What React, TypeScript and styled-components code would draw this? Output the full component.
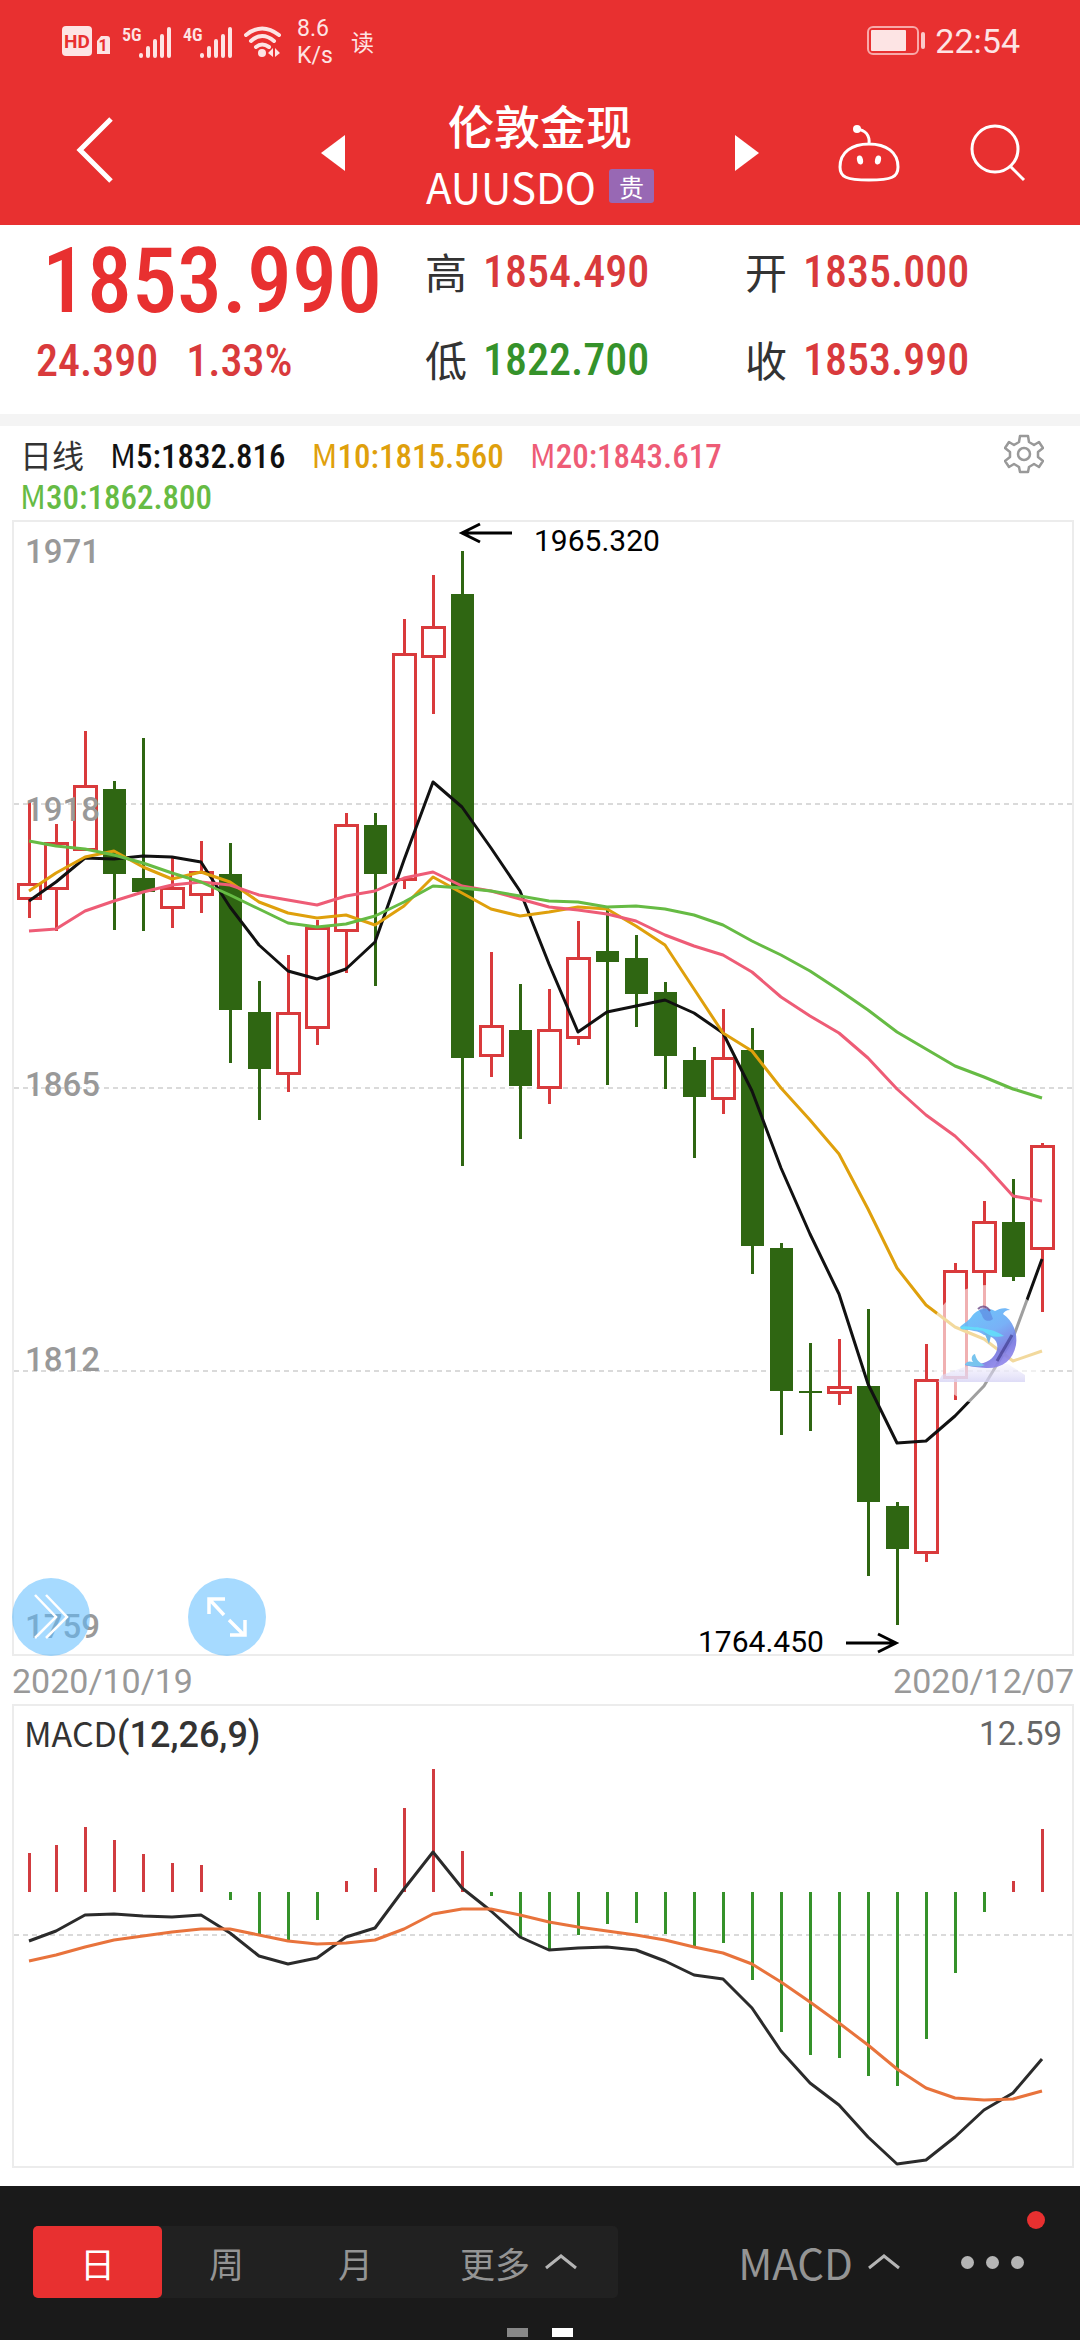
import React from "react";
import styled, { createGlobalStyle } from "styled-components";

const CJK = '"Noto Sans CJK SC", "Noto Sans", sans-serif';
const ROBOTO = 'Roboto, "Noto Sans CJK SC", sans-serif';
const NUM = '"Roboto Condensed", Roboto, sans-serif';

const RED = "#e83030";
const UP = "#d93a3c";
const DOWN = "#2f6612";

const GlobalStyle = createGlobalStyle`
  * { box-sizing: border-box; }
  body { margin: 0; background: #fff; font-family: ${CJK}; color: #333; }
  button { border: 0; padding: 0; margin: 0; background: none; font: inherit; color: inherit; cursor: pointer; }
  svg { display: block; }
`;

const Page = styled.div`
  display: flex;
  flex-direction: column;
  min-height: 100vh;
`;

const Header = styled.header`
  background: ${RED};
  color: #fff;
`;

const StatusBar = styled.div`
  display: flex;
  justify-content: space-between;
  align-items: center;
  height: 81px;
  padding: 0 60px 0 62px;
  color: #fde4e4;
  font-family: ${ROBOTO};
`;

const StatusGroup = styled.div`
  display: flex;
  align-items: center;
  gap: 10px;
`;

const Speed = styled.div`
  width: 44px;
  margin-left: 5px;
  padding-top: 2px;
  font-size: 23px;
  line-height: 27px;
`;

const ReadMark = styled.span`
  font-size: 23px;
`;

const Clock = styled.time`
  font-size: 34px;
  line-height: 40px;
`;

const Nav = styled.nav`
  display: grid;
  grid-template-columns: 1fr 524px 1fr;
  align-items: center;
  height: 144px;
`;

const NavStart = styled.div`
  display: flex;
  padding: 0 0 6px 76px;
`;

const NavMiddle = styled.div`
  display: flex;
  justify-content: space-between;
  align-items: center;
  padding: 0 42px;
`;

const NavEnd = styled.div`
  display: flex;
  justify-content: flex-end;
  align-items: center;
  gap: 70px;
  padding-right: 54px;
`;

const IconButton = styled.button`
  display: flex;
  align-items: center;
  justify-content: center;
`;

const Titles = styled.div`
  display: flex;
  flex-direction: column;
  align-items: center;
  padding-top: 4px;
`;

const Title = styled.h1`
  margin: 0;
  font-size: 46px;
  line-height: 62px;
  font-weight: 500;
`;

const SubTitle = styled.div`
  display: flex;
  align-items: center;
  gap: 13px;
  font-size: 42px;
  line-height: 62px;
`;

const Badge = styled.span`
  width: 45px;
  height: 34px;
  border-radius: 3px;
  background: #9868b4;
  font-size: 25px;
  line-height: 34px;
  text-align: center;
`;

const Quote = styled.section`
  display: grid;
  grid-template-columns: 389px 320px 1fr;
  height: 201px;
  padding-left: 36px;
  border-bottom: 12px solid #f4f4f4;
`;

const Price = styled.div`
  padding: 2px 0 0 6px;
  font-family: ${NUM};
  font-size: 90px;
  line-height: 110px;
  color: ${RED};
  font-weight: 500;
`;

const Changes = styled.div`
  display: flex;
  gap: 28px;
  font-family: ${NUM};
  font-size: 44px;
  line-height: 48px;
  font-weight: 500;
  color: ${UP};
`;

const QuoteColumn = styled.dl`
  display: flex;
  flex-direction: column;
  margin: 0;
  padding-top: 3px;
`;

const QuoteItem = styled.div`
  display: flex;
  align-items: center;
  gap: 16px;
  height: 88px;
`;

const QuoteLabel = styled.dt`
  padding-bottom: 2px;
  font-size: 42px;
  line-height: 60px;
`;

const QuoteValue = styled.dd<{ $color: string }>`
  margin: 0;
  font-family: ${NUM};
  font-size: 44px;
  line-height: 60px;
  font-weight: 500;
  color: ${(p) => p.$color};
`;

const LegendBar = styled.div`
  display: flex;
  align-items: flex-start;
  justify-content: space-between;
  height: 94px;
  padding: 8px 36px 0 20px;
`;

const Legend = styled.div`
  display: flex;
  flex-wrap: wrap;
  column-gap: 26px;
  max-width: 860px;
  font-size: 32px;
  line-height: 41px;
`;

const Ma = styled.span<{ $color: string }>`
  height: 41px;
  color: ${(p) => p.$color};
`;

const MaValue = styled.span`
  font-family: ${NUM};
  font-size: 33px;
  font-weight: 500;
`;

const ChartFrame = styled.section`
  position: relative;
  margin: 0 6px 0 12px;
  border: 2px solid #ececec;
`;

const ChartSvg = styled.svg`
  width: 100%;
  height: auto;
  overflow: visible;
`;

const RoundButton = styled.button<{ $left: number }>`
  position: absolute;
  left: ${(p) => p.$left}px;
  bottom: -2px;
  display: flex;
  align-items: center;
  justify-content: center;
  width: 78px;
  height: 78px;
  border-radius: 50%;
  background: rgba(93, 187, 255, 0.55);
`;

const Mascot = styled.button`
  position: absolute;
  right: 24px;
  bottom: 22%;
  width: 120px;
  height: 120px;
  border-radius: 50%;
  background: rgba(255, 255, 255, 0.6);
`;

const DateRow = styled.div`
  display: flex;
  justify-content: space-between;
  align-items: center;
  height: 48px;
  padding: 2px 6px 0 12px;
  font-family: ${ROBOTO};
  font-size: 34px;
  line-height: 46px;
  color: #999;
`;

const MacdHead = styled.div`
  display: flex;
  justify-content: space-between;
  align-items: center;
  position: absolute;
  inset: 2px 10px auto 10px;
  font-size: 34px;
  line-height: 50px;
`;

const MacdParams = styled.span`
  font-weight: 500;
  font-family: ${ROBOTO};
  font-size: 36px;
`;

const MacdValue = styled.span`
  font-family: ${ROBOTO};
  font-size: 33px;
  color: #666;
`;

const Footer = styled.footer`
  display: flex;
  flex-direction: column;
  justify-content: space-between;
  height: 154px;
  margin-top: auto;
  padding: 40px 0 3px;
  background: #1a1a1a;
  color: #949494;
`;

const FooterRow = styled.div`
  display: flex;
  align-items: center;
  justify-content: space-between;
  padding: 0 56px 0 33px;
`;

const Segments = styled.div`
  display: flex;
  height: 72px;
  border-radius: 5px;
  background: #212121;
`;

const Segment = styled.button<{ $active?: boolean; $wide?: boolean }>`
  display: flex;
  align-items: center;
  justify-content: center;
  gap: 14px;
  width: ${(p) => (p.$wide ? 198 : 129)}px;
  border-radius: 5px;
  background: ${(p) => (p.$active ? RED : "transparent")};
  color: ${(p) => (p.$active ? "#fff" : "inherit")};
  font-size: 35px;
`;

const FooterTools = styled.div`
  display: flex;
  align-items: center;
  gap: 60px;
`;

const Indicator = styled.button`
  display: flex;
  align-items: center;
  gap: 14px;
  font-size: 42px;
  line-height: 60px;
`;

const MoreButton = styled.button`
  position: relative;
  display: flex;
  align-items: center;
  justify-content: space-between;
  width: 63px;
  height: 60px;
`;

const Dot = styled.i`
  width: 13px;
  height: 13px;
  border-radius: 50%;
  background: #b5b5b5;
`;

const NoticeDot = styled.i`
  position: absolute;
  right: -21px;
  top: -21px;
  width: 18px;
  height: 18px;
  border-radius: 50%;
  background: ${RED};
`;

const Pager = styled.div`
  display: flex;
  justify-content: center;
  gap: 24px;
`;

const PagerMark = styled.i<{ $on?: boolean }>`
  width: 21px;
  height: 9px;
  background: ${(p) => (p.$on ? "#fff" : "#888")};
`;

/* x position of the nth trading day in both charts */
const dayX = (i: number) => (i === 0 ? 17 : 15 + 29 * i);

/* wick top, body top, body bottom, wick bottom, rising */
type Candle = [number, number, number, number, boolean];
const candles: Candle[] = [
  [282, 363, 379, 398, true],
  [304, 322, 369, 411, true],
  [211, 265, 330, 330, true],
  [261, 269, 354, 410, false],
  [218, 358, 372, 411, false],
  [336, 367, 388, 408, true],
  [321, 351, 375, 393, true],
  [323, 354, 490, 543, false],
  [461, 492, 549, 600, false],
  [435, 492, 554, 572, true],
  [400, 407, 508, 525, true],
  [293, 304, 411, 453, true],
  [293, 305, 354, 466, false],
  [99, 133, 360, 369, true],
  [55, 106, 137, 194, true],
  [31, 74, 538, 646, false],
  [432, 505, 536, 557, true],
  [464, 510, 566, 619, false],
  [469, 509, 568, 584, true],
  [401, 437, 518, 525, true],
  [386, 431, 442, 565, false],
  [415, 438, 474, 507, false],
  [462, 472, 536, 569, false],
  [527, 540, 577, 638, false],
  [489, 537, 579, 594, true],
  [508, 530, 726, 754, false],
  [723, 728, 871, 915, false],
  [823, 871, 873, 911, false],
  [819, 866, 873, 885, true],
  [789, 866, 982, 1056, false],
  [982, 986, 1029, 1105, false],
  [824, 859, 1033, 1042, true],
  [743, 750, 858, 880, true],
  [681, 701, 752, 791, true],
  [659, 702, 757, 761, false],
  [623, 625, 729, 792, true],
];

const averages = [
  {
    color: "#111",
    ys: [381, 362, 338, 339, 336, 337, 342, 387, 425, 451, 459, 449, 422, 340, 262, 287, 328, 371, 444, 512, 492, 486, 480, 493, 513, 571, 648, 714, 774, 864, 923, 921, 896, 866, 818, 739],
  },
  {
    color: "#dfa00c",
    ys: [371, 353, 337, 331, 347, 359, 352, 362, 382, 393, 398, 395, 405, 386, 357, 373, 389, 396, 392, 387, 389, 406, 425, 469, 513, 531, 568, 600, 634, 689, 748, 785, 807, 819, 841, 831],
  },
  {
    color: "#ee5c76",
    ys: [411, 409, 391, 381, 372, 365, 362, 365, 375, 380, 385, 376, 371, 358, 352, 366, 371, 379, 387, 390, 394, 401, 415, 426, 435, 452, 477, 496, 513, 538, 569, 595, 616, 644, 676, 681],
  },
  {
    color: "#66bb44",
    ys: [321, 326, 329, 335, 343, 353, 362, 375, 389, 403, 407, 404, 396, 382, 366, 368, 371, 376, 381, 382, 387, 386, 389, 395, 405, 421, 435, 451, 470, 490, 512, 529, 546, 557, 569, 578],
  },
];

const macdZero = 188;
const macdBars = [149, 141, 123, 136, 150, 159, 161, 196, 230, 236, 216, 177, 164, 104, 65, 147, 192, 233, 245, 231, 220, 219, 230, 242, 239, 276, 328, 351, 354, 372, 382, 335, 269, 208, 177, 125];
const dif = [237, 227, 211, 210, 212, 213, 211, 229, 252, 260, 254, 233, 224, 185, 148, 184, 207, 233, 246, 244, 243, 246, 257, 271, 275, 304, 347, 379, 401, 433, 460, 456, 433, 406, 389, 355];
const dea = [257, 251, 243, 236, 232, 228, 225, 225, 231, 237, 240, 239, 236, 225, 210, 205, 205, 211, 218, 223, 227, 231, 236, 243, 249, 260, 278, 298, 319, 341, 365, 384, 394, 396, 395, 387];

const toPoints = (ys: number[]) => ys.map((y, i) => `${dayX(i)},${y}`).join(" ");

const gridLines = [284, 568, 851];
const axisLabels = [
  { text: "1971", y: 43 },
  { text: "1918", y: 301 },
  { text: "1865", y: 576 },
  { text: "1812", y: 851 },
  { text: "1759", y: 1118 },
];

function CandleMark({ candle, x }: { candle: Candle; x: number }) {
  const [high, top, bottom, low, rising] = candle;
  if (!rising) {
    return (
      <g fill={DOWN}>
        <rect x={x - 1} y={high} width={3} height={low - high} />
        <rect x={x - 11} y={top} width={23} height={bottom - top} />
      </g>
    );
  }
  return (
    <g stroke={UP} strokeWidth={3} fill="none">
      <path d={`M${x} ${high}V${top}M${x} ${bottom}V${low}`} />
      <rect x={x - 11} y={top + 1} width={22} height={bottom - top - 2} />
    </g>
  );
}

function PriceChart() {
  return (
    <ChartSvg viewBox="2 2 1058 1132" role="img" aria-label="日线">
      {gridLines.map((y) => (
        <line key={y} x1={2} x2={1060} y1={y} y2={y} stroke="#dadada" strokeWidth={2} strokeDasharray="5 4" />
      ))}
      <g shapeRendering="crispEdges">
        {candles.map((c, i) => (
          <CandleMark key={i} candle={c} x={dayX(i)} />
        ))}
      </g>
      {averages.map((a) => (
        <polyline key={a.color} points={toPoints(a.ys)} fill="none" stroke={a.color} strokeWidth={3} strokeLinejoin="round" />
      ))}
      <g fontFamily="Roboto, sans-serif" fontSize={33} fontWeight={500} fill="#999">
        {axisLabels.map((l) => (
          <text key={l.text} x={13} y={l.y}>
            {l.text}
          </text>
        ))}
      </g>
      <g fontFamily="Roboto, sans-serif" fontSize={30} fill="#000">
        <text x={522} y={31}>1965.320</text>
        <text x={686} y={1132}>1764.450</text>
      </g>
      <g fill="none" stroke="#000" strokeWidth={3}>
        <path d="M500 13H451M468 4L450 13L468 22" />
        <path d="M834 1123H883M866 1114L884 1123L866 1132" />
      </g>
    </ChartSvg>
  );
}

function MacdChart() {
  return (
    <ChartSvg viewBox="2 2 1058 460" role="img" aria-label="MACD">
      <line x1={2} x2={1060} y1={231} y2={231} stroke="#dadada" strokeWidth={2} strokeDasharray="5 4" />
      <g shapeRendering="crispEdges">
        {macdBars.map((y, i) => (
          <line key={i} x1={dayX(i)} x2={dayX(i)} y1={macdZero} y2={y} stroke={y < macdZero ? "#d13c40" : "#35922a"} strokeWidth={3} />
        ))}
      </g>
      <polyline points={toPoints(dif)} fill="none" stroke="#2b2b2b" strokeWidth={3} strokeLinejoin="round" />
      <polyline points={toPoints(dea)} fill="none" stroke="#e8733c" strokeWidth={3} strokeLinejoin="round" />
    </ChartSvg>
  );
}

const Dolphin = () => (
  <svg width="120" height="120" viewBox="0 0 120 120" aria-hidden="true">
    <defs>
      <linearGradient id="dolphinSkin" x1="0.2" y1="0" x2="0.8" y2="1">
        <stop offset="0" stopColor="#5cc0fa" />
        <stop offset="0.45" stopColor="#6aa8f6" />
        <stop offset="0.75" stopColor="#7676e0" />
        <stop offset="1" stopColor="#9a8cf0" />
      </linearGradient>
      <linearGradient id="dolphinBase" x1="0" y1="0" x2="0" y2="1">
        <stop offset="0" stopColor="#e9e6fb" stopOpacity="0.3" />
        <stop offset="1" stopColor="#d6d3f5" stopOpacity="0.8" />
      </linearGradient>
    </defs>
    <path d="M14 90L45 79H80L97 90V97H10Z" fill="url(#dolphinBase)" />
    <path
      d="M32 42C36 38 41 36 44 31C50 23 60 22 67 26C72 23 78 22 82 25C78 25 76 27 75 29C85 36 90 48 88 60C85 76 73 84 58 83C50 82 44 82 37 80C36 78 42 78 46 79C57 80 66 74 69 65C71 56 65 51 56 50C52 46 41 45 33 44Z"
      fill="url(#dolphinSkin)"
      opacity="0.9"
    />
    <path d="M33 42C39 40 44 43 49 42C56 44 66 44 76 51C68 53 60 51 55 46C48 44 39 45 33 44Z" fill="#62e0fa" opacity="0.85" />
    <path d="M56 47L61 59L63 51Z" fill="#6db4e8" />
    <path d="M37 80C38 76 42 76 45 77C42 73 45 69 47 69C48 74 51 78 57 80C51 83 43 81 37 80Z" fill="#78c4ee" />
    <path d="M51 25C55 21 60 22 62 26L65 34C60 38 55 35 54 30Z" fill="#5876d8" opacity="0.5" />
    <path d="M50 24C54 20 59 21 62 26" fill="none" stroke="#6c4a86" strokeOpacity="0.8" strokeWidth="2" />
    <path d="M84 50L69 76" stroke="#26206e" strokeOpacity="0.5" strokeWidth="3" />
  </svg>
);

const SignalBars = ({ label }: { label: string }) => (
  <svg width="51" height="36" viewBox="0 0 51 36" aria-hidden="true">
    <text x="0" y="18" fontFamily={NUM} fontSize="18" fontWeight="600" fill="#fde4e4">
      {label}
    </text>
    <path d="M19 32V33M26 25V33M33 18V33M40 13V33M47 6V33" stroke="#fde4e4" strokeWidth="4" strokeLinecap="round" />
  </svg>
);

const ChevronUp = () => (
  <svg width="34" height="18" viewBox="0 0 34 18" aria-hidden="true">
    <path d="M2 15L17 3L32 15" fill="none" stroke="#b5b5b5" strokeWidth="3" />
  </svg>
);

const legend = [
  { name: "5", value: "1832.816", color: "#111" },
  { name: "10", value: "1815.560", color: "#dfa00c" },
  { name: "20", value: "1843.617", color: "#ee5c76" },
  { name: "30", value: "1862.800", color: "#66bb44" },
];

const quotes = [
  [
    { label: "高", value: "1854.490", color: UP },
    { label: "低", value: "1822.700", color: "#35922a" },
  ],
  [
    { label: "开", value: "1835.000", color: UP },
    { label: "收", value: "1853.990", color: UP },
  ],
];

export default function App() {
  return (
    <Page>
      <GlobalStyle />
      <Header>
        <StatusBar>
          <StatusGroup>
            <svg width="50" height="34" viewBox="0 0 50 34" aria-hidden="true">
              <rect x="0" y="2" width="30" height="30" rx="4" fill="#fde4e4" />
              <text x="15" y="24" textAnchor="middle" fontFamily="Roboto, sans-serif" fontSize="19" fontWeight="700" fill={RED}>
                HD
              </text>
              <path d="M35 17L39 12H45Q48 12 48 15V30H35Z" fill="#fde4e4" />
              <text x="41" y="27" textAnchor="middle" fontFamily="Roboto, sans-serif" fontSize="16" fontWeight="700" fill={RED}>
                1
              </text>
            </svg>
            <SignalBars label="5G" />
            <SignalBars label="4G" />
            <svg width="38" height="36" viewBox="0 0 38 36" aria-hidden="true">
              <g fill="none" stroke="#fde4e4" strokeWidth="4" strokeLinecap="round">
                <path d="M2 12Q18 -1 35 12" />
                <path d="M7 18Q18 8 30 18" />
                <path d="M12 24Q18 19 25 24" />
              </g>
              <circle cx="18" cy="30" r="4" fill="#fde4e4" />
              <path d="M29 25V34L24 30ZM31 25L36 30L31 34Z" fill="#fde4e4" />
            </svg>
            <Speed>
              8.6
              <br />
              K/s
            </Speed>
            <ReadMark>读</ReadMark>
          </StatusGroup>
          <StatusGroup>
            <svg width="58" height="30" viewBox="0 0 58 30" aria-hidden="true">
              <rect x="1" y="1" width="50" height="27" rx="5" fill="none" stroke="#f8a9a9" strokeWidth="2" />
              <rect x="4" y="4" width="35" height="21" rx="1" fill="#fde4e4" />
              <rect x="54" y="6" width="4" height="17" rx="2" fill="#fbc9c9" />
            </svg>
            <Clock>22:54</Clock>
          </StatusGroup>
        </StatusBar>
        <Nav>
          <NavStart>
            <IconButton aria-label="返回">
              <svg width="38" height="66" viewBox="0 0 38 66">
                <path d="M35 2L4 33L35 64" fill="none" stroke="#fff" strokeWidth="5" />
              </svg>
            </IconButton>
          </NavStart>
          <NavMiddle>
            <IconButton aria-label="上一个">
              <svg width="26" height="38" viewBox="0 0 26 38">
                <path d="M1 19L25 1V37Z" fill="#fff" />
              </svg>
            </IconButton>
            <Titles>
              <Title>伦敦金现</Title>
              <SubTitle>
                AUUSDO<Badge>贵</Badge>
              </SubTitle>
            </Titles>
            <IconButton aria-label="下一个">
              <svg width="26" height="38" viewBox="0 0 26 38">
                <path d="M25 19L1 1V37Z" fill="#fff" />
              </svg>
            </IconButton>
          </NavMiddle>
          <NavEnd>
            <IconButton aria-label="助手">
              <svg width="62" height="58" viewBox="0 0 62 58">
                <path d="M31 20C14 20 2 28 2 43C2 53 8 56 31 56S60 53 60 43C60 28 48 20 31 20ZM31 20C32 11 27 6 19 5" fill="none" stroke="#fff" strokeWidth="3" />
                <circle cx="19" cy="5" r="4" fill="#fff" />
                <ellipse cx="22" cy="36" rx="3" ry="4.5" fill="#fff" transform="rotate(-12 22 36)" />
                <ellipse cx="40" cy="36" rx="3" ry="4.5" fill="#fff" transform="rotate(12 40 36)" />
              </svg>
            </IconButton>
            <IconButton aria-label="搜索">
              <svg width="56" height="58" viewBox="0 0 56 58">
                <circle cx="25" cy="25" r="23" fill="none" stroke="#fff" strokeWidth="3" />
                <path d="M40 42L54 56" stroke="#fff" strokeWidth="3" />
              </svg>
            </IconButton>
          </NavEnd>
        </Nav>
      </Header>

      <Quote>
        <div>
          <Price>1853.990</Price>
          <Changes>
            <span>24.390</span>
            <span>1.33%</span>
          </Changes>
        </div>
        {quotes.map((column, i) => (
          <QuoteColumn key={i}>
            {column.map((q) => (
              <QuoteItem key={q.label}>
                <QuoteLabel>{q.label}</QuoteLabel>
                <QuoteValue $color={q.color}>{q.value}</QuoteValue>
              </QuoteItem>
            ))}
          </QuoteColumn>
        ))}
      </Quote>

      <LegendBar>
        <Legend>
          <span>日线</span>
          {legend.map((m) => (
            <Ma key={m.name} $color={m.color}>
              M
              <MaValue>
                {m.name}:{m.value}
              </MaValue>
            </Ma>
          ))}
        </Legend>
        <IconButton aria-label="设置">
          <svg width="40" height="40" viewBox="0 0 40 40" fill="none" stroke="#999" strokeWidth="2.5" strokeLinejoin="round">
            <path d="M16 2H24L25 8L30 11L35 8L39 14L34 18V23L39 27L35 33L30 30L25 33L24 38H16L15 33L10 30L5 33L1 27L6 23V18L1 14L5 8L10 11L15 8Z" />
            <circle cx="20" cy="20" r="6" />
          </svg>
        </IconButton>
      </LegendBar>

      <ChartFrame>
        <PriceChart />
        <RoundButton $left={-2} aria-label="展开">
          <svg width="78" height="78" viewBox="0 0 78 78">
            <path d="M23 17L44 39L23 60M34 17L55 39L34 60" fill="none" stroke="#fff" strokeWidth="2.5" />
          </svg>
        </RoundButton>
        <RoundButton $left={174} aria-label="全屏">
          <svg width="78" height="78" viewBox="0 0 78 78">
            <path d="M21 36V21H37M22 22L36 37M41 42L56 57M42 57H57V42" fill="none" stroke="#fff" strokeWidth="3.5" />
          </svg>
        </RoundButton>
        <Mascot aria-label="客服">
          <Dolphin />
        </Mascot>
      </ChartFrame>

      <DateRow>
        <time>2020/10/19</time>
        <time>2020/12/07</time>
      </DateRow>

      <ChartFrame>
        <MacdChart />
        <MacdHead>
          <span>
            MACD<MacdParams>(12,26,9)</MacdParams>
          </span>
          <MacdValue>12.59</MacdValue>
        </MacdHead>
      </ChartFrame>

      <Footer>
        <FooterRow>
          <Segments>
            <Segment $active>日</Segment>
            <Segment>周</Segment>
            <Segment>月</Segment>
            <Segment $wide>
              更多
              <ChevronUp />
            </Segment>
          </Segments>
          <FooterTools>
            <Indicator>
              MACD
              <ChevronUp />
            </Indicator>
            <MoreButton aria-label="更多">
              <Dot />
              <Dot />
              <Dot />
              <NoticeDot />
            </MoreButton>
          </FooterTools>
        </FooterRow>
        <Pager>
          <PagerMark />
          <PagerMark $on />
        </Pager>
      </Footer>
    </Page>
  );
}
